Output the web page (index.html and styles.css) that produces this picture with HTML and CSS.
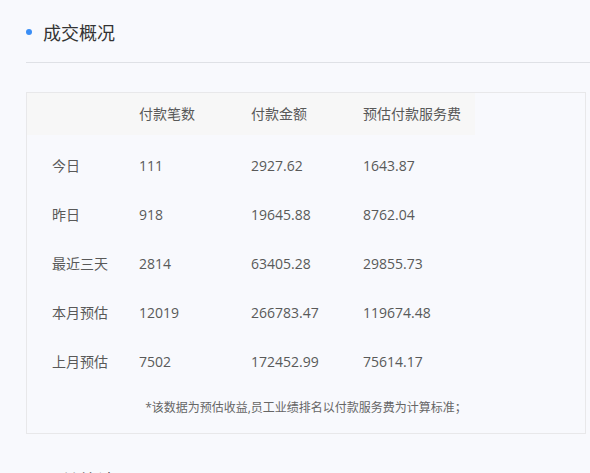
FILE: index.html
```html
<!DOCTYPE html>
<html lang="zh-CN">
<head>
<meta charset="utf-8">
<title>成交概况</title>
<link rel="stylesheet" href="styles.css">
</head>
<body>
<div class="page">
  <section class="section">
    <div class="section-head">
      <span class="dot"></span>
      <h2 class="section-title">成交概况</h2>
    </div>
    <div class="card">
      <div class="table">
        <div class="row head">
          <div class="cell"></div>
          <div class="cell">付款笔数</div>
          <div class="cell">付款金额</div>
          <div class="cell">预估付款服务费</div>
        </div>
        <div class="body">
          <div class="row">
            <div class="cell">今日</div>
            <div class="cell">111</div>
            <div class="cell">2927.62</div>
            <div class="cell">1643.87</div>
          </div>
          <div class="row">
            <div class="cell">昨日</div>
            <div class="cell">918</div>
            <div class="cell">19645.88</div>
            <div class="cell">8762.04</div>
          </div>
          <div class="row">
            <div class="cell">最近三天</div>
            <div class="cell">2814</div>
            <div class="cell">63405.28</div>
            <div class="cell">29855.73</div>
          </div>
          <div class="row">
            <div class="cell">本月预估</div>
            <div class="cell">12019</div>
            <div class="cell">266783.47</div>
            <div class="cell">119674.48</div>
          </div>
          <div class="row">
            <div class="cell">上月预估</div>
            <div class="cell">7502</div>
            <div class="cell">172452.99</div>
            <div class="cell">75614.17</div>
          </div>
        </div>
      </div>
      <p class="note">*该数据为预估收益,员工业绩排名以付款服务费为计算标准；</p>
    </div>
  </section>
  <section class="section next">
    <div class="section-head">
      <span class="dot"></span>
      <h2 class="section-title">工单统计</h2>
    </div>
  </section>
</div>
</body>
</html>
```

FILE: styles.css
```css
html, body {
  margin: 0;
  padding: 0;
  background: #f8f9fd;
  overflow: hidden;
}

body {
  font-family: "Open Sans", "Noto Sans CJK SC", sans-serif;
  color: #595959;
}

.page {
  width: 590px;
  height: 473px;
  overflow: hidden;
}

.section {
  padding-left: 26px;
}

.section-head {
  display: flex;
  align-items: center;
  height: 24px;
  padding-top: 21px;
  padding-bottom: 17px;
  border-bottom: 1px solid #dfe1e6;
  margin-right: -20px;
}

.dot {
  width: 6px;
  height: 6px;
  border-radius: 50%;
  background: #3a8ef6;
  margin-right: 11px;
  position: relative;
  top: -1px;
}

.section-title {
  margin: 0;
  font-size: 18px;
  font-weight: normal;
  line-height: 24px;
  color: #333;
}

.card {
  margin-top: 29px;
  width: 558px;
  border: 1px solid #e8e8ea;
  background: #f8f9fd;
}

.table {
  display: flex;
  flex-direction: column;
}

.row {
  display: grid;
  grid-template-columns: 87px 112px 112px 137px;
  height: 49px;
  align-items: center;
  font-size: 14px;
  line-height: 20px;
}

.row.head {
  height: 42px;
  width: 448px;
  background: #f7f7f7;
}

.body {
  padding-top: 6px;
}

.cell {
  padding-left: 25px;
  white-space: nowrap;
}

.note {
  margin: 13px 0 16px;
  text-align: center;
  font-size: 12px;
  line-height: 18px;
  color: #666;
}

.next .section-head {
  border-bottom: none;
  padding-top: 35px;
}
```
